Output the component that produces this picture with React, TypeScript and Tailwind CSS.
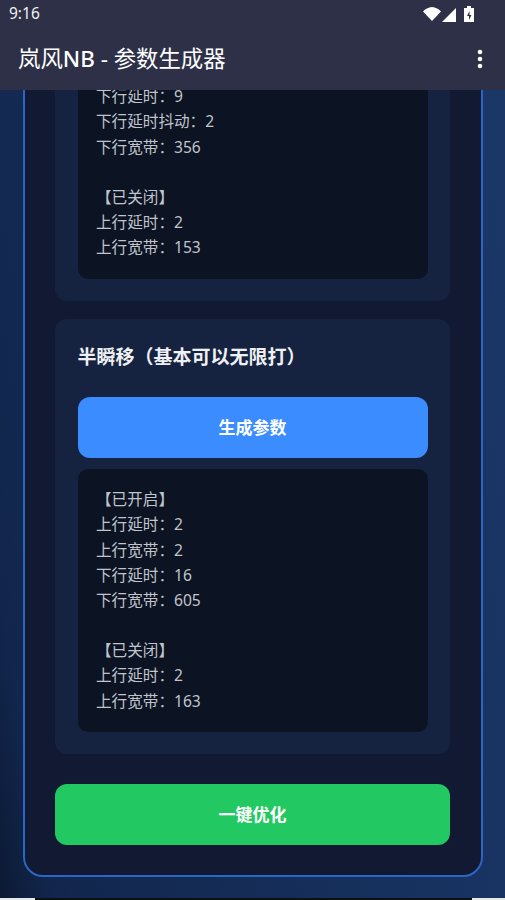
const font = "font-['Noto_Sans','Noto_Sans_CJK_SC',sans-serif]";

function Result({ lines }: { lines: string[] }) {
  return (
    <div className="rounded-[10px] bg-[#0c1322] pl-[18.500px] pr-4 pt-[18px] pb-[18.200px] text-[15.600px] leading-[25.200px] text-[#c0c4cc]">
      {lines.map((l, i) => (
        <div key={i} className="h-[25.200px]">{l}</div>
      ))}
    </div>
  );
}

export default function App() {
  return (
    <div className={`${font} relative flex h-[900px] w-[505px] flex-col overflow-hidden bg-[#16294f]`}>
      <header className="z-10 h-[90px] shrink-0 bg-[#2e3047] text-white">
        <div className="flex h-[28px] items-center justify-between pl-[9px] pr-[31px]">
          <span className="text-[15.500px] leading-none text-[#f0f0f2]">9:16</span>
          <div className="flex items-center">
            <svg width="18" height="14" viewBox="0 0 18 14"><path d="M0 4.500C2.200 2.200 5.400 0 9 0s6.800 2.200 9 4.500L9 14z" fill="#fff" /></svg>
            <svg className="ml-[1px] mt-[1px]" width="14" height="14" viewBox="0 0 14 14"><path d="M14 0v14H0z" fill="#fff" /></svg>
            <svg className="ml-[8px]" width="10" height="16" viewBox="0 0 10 16"><path d="M3 0h4v2h3v14H0V2h3z" fill="#fff" /><path d="M5.500 5 3 10h2v4l2.500-5H5.500z" fill="#2e3047" /></svg>
          </div>
        </div>
        <div className="flex h-[62px] items-center justify-between pl-[18px] pr-[22px]">
          <h1 className="text-[22.400px] font-normal leading-none">岚风<span className="font-medium">NB</span> - 参数生成器</h1>
          <svg className="mb-[1px]" width="6" height="20" viewBox="0 0 6 20" fill="#fff"><circle cx="3" cy="3" r="2.300" /><circle cx="3" cy="10" r="2.300" /><circle cx="3" cy="17" r="2.300" /></svg>
        </div>
      </header>
      <main className="flex min-h-0 flex-1 flex-col justify-end overflow-hidden bg-[linear-gradient(80deg,#0c1933_0%,#12264d_8%,#16305c_55%,#1b3768_100%)] px-[22.500px] pb-[21px]">
        <div className="shrink-0 rounded-[20px] border-2 border-[#2a66c4] bg-[#111a32] px-[30.500px] pb-[30px]">
          <section className="rounded-[12px] bg-[#162340] px-[22.500px] pb-[22.500px]">
            <Result lines={["下行延时：9", "下行延时抖动：2", "下行宽带：356", "", "【已关闭】", "上行延时：2", "上行宽带：153"]} />
          </section>
          <section className="mt-[18px] rounded-[12px] bg-[#162340] px-[22.500px] pb-[22px] pt-[23px]">
            <h2 className="text-[19px] font-bold leading-[30px] text-[#eef0f3]">半瞬移（基本可以无限打）</h2>
            <button className="mt-[25px] block h-[61px] w-full rounded-[12px] bg-[#3b8cff] text-[17px] font-bold text-white">生成参数</button>
            <div className="mt-[11px]">
              <Result lines={["【已开启】", "上行延时：2", "上行宽带：2", "下行延时：16", "下行宽带：605", "", "【已关闭】", "上行延时：2", "上行宽带：163"]} />
            </div>
          </section>
          <button className="mt-[30px] block h-[61px] w-full rounded-[12px] bg-[#22c861] text-[17px] font-bold text-white">一键优化</button>
        </div>
      </main>
      <footer className="flex h-[2px] shrink-0 overflow-hidden bg-[#0e0f12]">
        <div className="h-full w-[35px] bg-[#e8e8e8]" />
        <div className="flex-1 pl-[68px] text-[15.600px] leading-[22px] text-[#c4c8d0]">上行范围：优化</div>
        <div className="h-full w-[33px] bg-[#e8e8e8]" />
      </footer>
    </div>
  );
}
